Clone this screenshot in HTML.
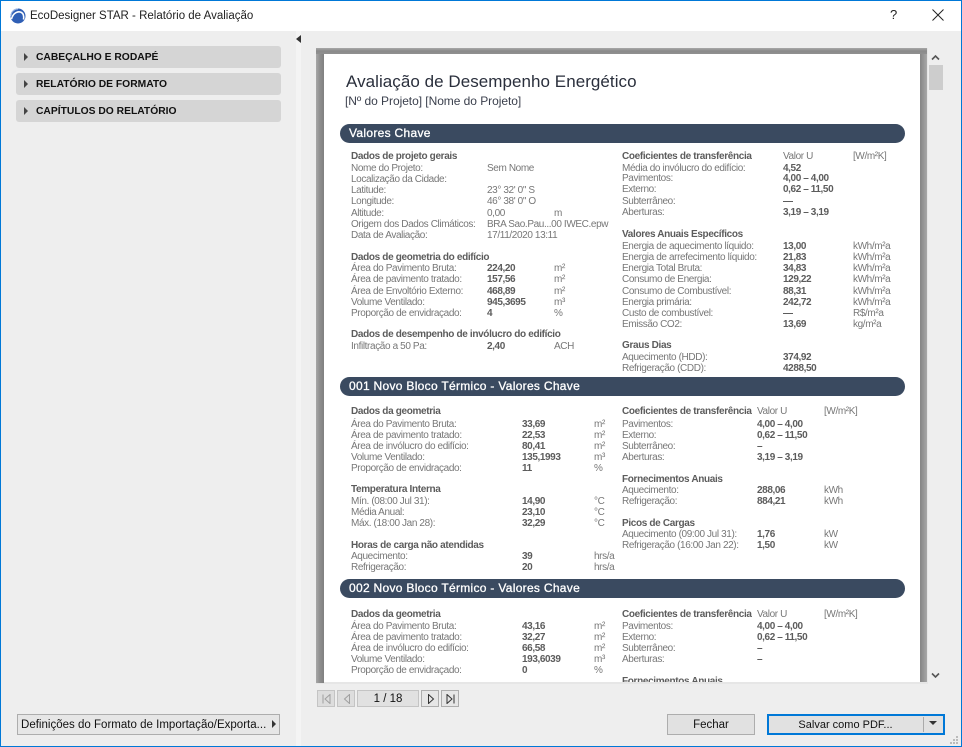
<!DOCTYPE html>
<html><head><meta charset="utf-8"><style>
html,body{margin:0;padding:0;width:962px;height:747px;overflow:hidden;background:#eee}
body{position:relative;font-family:"Liberation Sans",sans-serif}
div,span{position:absolute;white-space:nowrap}
.t{font-size:10px;line-height:12px;color:#777;height:12px;letter-spacing:-.38px}
.h{font-size:10px;line-height:12px;color:#5c5c5c;font-weight:bold;letter-spacing:-.34px;height:12px}
.b{font-size:10px;line-height:12px;color:#5c5c5c;font-weight:bold;letter-spacing:-.4px;height:12px}
.bar{left:340px;width:565px;height:19px;background:#3a4a60;border-radius:10px;color:#fff;font-size:12px;line-height:19px}
.bar span{left:9px;top:0;letter-spacing:.3px;-webkit-text-stroke:.3px #fff}
.acc{left:16px;width:265px;height:22px;background:#d5d5d5;border-radius:3px;font-size:10.3px;font-weight:bold;line-height:23px;color:#111}
.acc span{left:20px;top:0}
.acc i{position:absolute;left:8px;top:7px;width:0;height:0;border-left:4px solid #444;border-top:4px solid transparent;border-bottom:4px solid transparent}
.btn{background:#e1e1e1;border:1px solid #adadad;box-sizing:border-box;font-size:11.5px;color:#111;text-align:center}
</style></head><body>
<div style="left:0;top:0;width:962px;height:31px;background:#fff"></div>
<div style="left:0;top:0;width:962px;height:1px;background:#0078d7"></div>
<div style="left:0;top:0;width:1px;height:747px;background:#0078d7"></div>
<div style="left:961px;top:0;width:1px;height:747px;background:#0078d7"></div>
<div style="left:0;top:746px;width:962px;height:1px;background:#0078d7"></div>
<svg style="position:absolute;left:10px;top:8px" width="16" height="16" viewBox="0 0 16 16"><circle cx="8" cy="8" r="7.5" fill="#2f5fb5"/><path d="M1.5 11C3 5 8 2.5 11.5 4.5c2 1.2 2.5 4 2 7" fill="none" stroke="#fff" stroke-width="1.6"/><path d="M1 8A7 7 0 0 1 8 1" fill="none" stroke="#9db8e6" stroke-width="1"/></svg>
<div style="left:30px;top:8px;font-size:11.5px;line-height:16px;color:#222">EcoDesigner STAR - Relatório de Avaliação</div>
<div style="left:890px;top:7px;font-size:13px;line-height:16px;color:#222">?</div>
<svg style="position:absolute;left:932px;top:9px" width="12" height="12" viewBox="0 0 12 12"><path d="M.5.5l11 11M11.5.5l-11 11" stroke="#222" stroke-width="1" fill="none"/></svg>

<div style="left:296px;top:31px;width:5px;height:715px;background:#f4f4f4"></div>
<div style="left:296px;top:35px;width:0;height:0;border-right:5px solid #333;border-top:4px solid transparent;border-bottom:4px solid transparent"></div>

<div class="acc" style="top:46px"><i></i><span>CABEÇALHO E RODAPÉ</span></div>
<div class="acc" style="top:73px"><i></i><span>RELATÓRIO DE FORMATO</span></div>
<div class="acc" style="top:100px"><i></i><span>CAPÍTULOS DO RELATÓRIO</span></div>

<div class="btn" style="left:17px;top:714px;width:263px;height:21px;text-align:left;line-height:21px;padding-left:3px;background:#e6e6e6;letter-spacing:.01px">Definições do Formato de Importação/Exporta...<i style="position:absolute;left:254px;top:5px;width:0;height:0;border-left:4px solid #333;border-top:4px solid transparent;border-bottom:4px solid transparent"></i></div>

<!-- page frame -->
<div style="left:316px;top:48px;width:612px;height:636px;background:#e6e6e6"></div>
<div style="left:316px;top:48px;width:611px;height:635px;background:linear-gradient(90deg,#a8a8a8,#8e8e8e 4px,#808080 8px,#808080 603px,#a8a8a8)"></div>
<div style="left:316px;top:48px;width:611px;height:6px;background:linear-gradient(180deg,#a8a8a8,#8a8a8a 3px,#909090)"></div>
<div style="left:324px;top:54px;width:596px;height:628px;background:#fff"></div>
<div style="left:324px;top:682px;width:603px;height:2px;background:#e6e6e6"></div>

<div style="left:346px;top:72px;font-size:17px;line-height:20px;color:#2a2f3c;letter-spacing:.05px">Avaliação de Desempenho Energético</div>
<div style="left:345px;top:94px;font-size:12px;line-height:14px;color:#3a3f4c;letter-spacing:-.05px">[Nº do Projeto] [Nome do Projeto]</div>

<div class="bar" style="top:124px"><span>Valores Chave</span></div>
<div class="bar" style="top:377px"><span>001 Novo Bloco Térmico - Valores Chave</span></div>
<div class="bar" style="top:579px"><span>002 Novo Bloco Térmico - Valores Chave</span></div>

<div style="left:0;top:2px;width:962px;height:680px;overflow:hidden">
<!-- Section 1 left -->
<span class="h" style="left:351px;top:149px">Dados de projeto gerais</span>
<span class="t" style="left:351px;top:161px">Nome do Projeto:</span><span class="t" style="left:487px;top:161px">Sem Nome</span>
<span class="t" style="left:351px;top:172px">Localização da Cidade:</span>
<span class="t" style="left:351px;top:183px">Latitude:</span><span class="t" style="left:487px;top:183px">23° 32' 0" S</span>
<span class="t" style="left:351px;top:194px">Longitude:</span><span class="t" style="left:487px;top:194px">46° 38' 0" O</span>
<span class="t" style="left:351px;top:206px">Altitude:</span><span class="t" style="left:487px;top:206px">0,00</span><span class="t" style="left:554px;top:206px">m</span>
<span class="t" style="left:351px;top:217px">Origem dos Dados Climáticos:</span><span class="t" style="left:487px;top:217px">BRA Sao.Pau...00 IWEC.epw</span>
<span class="t" style="left:351px;top:228px">Data de Avaliação:</span><span class="t" style="left:487px;top:228px">17/11/2020 13:11</span>

<span class="h" style="left:351px;top:250px">Dados de geometria do edifício</span>
<span class="t" style="left:351px;top:261px">Área do Pavimento Bruta:</span><span class="b" style="left:487px;top:261px">224,20</span><span class="t" style="left:554px;top:261px">m²</span>
<span class="t" style="left:351px;top:272px">Área de pavimento tratado:</span><span class="b" style="left:487px;top:272px">157,56</span><span class="t" style="left:554px;top:272px">m²</span>
<span class="t" style="left:351px;top:284px">Área de Envoltório Externo:</span><span class="b" style="left:487px;top:284px">468,89</span><span class="t" style="left:554px;top:284px">m²</span>
<span class="t" style="left:351px;top:295px">Volume Ventilado:</span><span class="b" style="left:487px;top:295px">945,3695</span><span class="t" style="left:554px;top:295px">m³</span>
<span class="t" style="left:351px;top:306px">Proporção de envidraçado:</span><span class="b" style="left:487px;top:306px">4</span><span class="t" style="left:554px;top:306px">%</span>

<span class="h" style="left:351px;top:327px">Dados de desempenho de invólucro do edifício</span>
<span class="t" style="left:351px;top:339px">Infiltração a 50 Pa:</span><span class="b" style="left:487px;top:339px">2,40</span><span class="t" style="left:554px;top:339px">ACH</span>

<!-- Section 1 right -->
<span class="h" style="left:622px;top:149px">Coeficientes de transferência</span><span class="t" style="left:783px;top:149px">Valor U</span><span class="t" style="left:853px;top:149px">[W/m²K]</span>
<span class="t" style="left:622px;top:161px">Média do invólucro do edifício:</span><span class="b" style="left:783px;top:161px">4,52</span>
<span class="t" style="left:622px;top:171px">Pavimentos:</span><span class="b" style="left:783px;top:171px">4,00 – 4,00</span>
<span class="t" style="left:622px;top:182px">Externo:</span><span class="b" style="left:783px;top:182px">0,62 – 11,50</span>
<span class="t" style="left:622px;top:194px">Subterrâneo:</span><span class="b" style="left:783px;top:194px">—</span>
<span class="t" style="left:622px;top:205px">Aberturas:</span><span class="b" style="left:783px;top:205px">3,19 – 3,19</span>

<span class="h" style="left:622px;top:227px">Valores Anuais Específicos</span>
<span class="t" style="left:622px;top:239px">Energia de aquecimento líquido:</span><span class="b" style="left:783px;top:239px">13,00</span><span class="t" style="left:853px;top:239px">kWh/m²a</span>
<span class="t" style="left:622px;top:250px">Energia de arrefecimento líquido:</span><span class="b" style="left:783px;top:250px">21,83</span><span class="t" style="left:853px;top:250px">kWh/m²a</span>
<span class="t" style="left:622px;top:261px">Energia Total Bruta:</span><span class="b" style="left:783px;top:261px">34,83</span><span class="t" style="left:853px;top:261px">kWh/m²a</span>
<span class="t" style="left:622px;top:272px">Consumo de Energia:</span><span class="b" style="left:783px;top:272px">129,22</span><span class="t" style="left:853px;top:272px">kWh/m²a</span>
<span class="t" style="left:622px;top:284px">Consumo de Combustível:</span><span class="b" style="left:783px;top:284px">88,31</span><span class="t" style="left:853px;top:284px">kWh/m²a</span>
<span class="t" style="left:622px;top:295px">Energia primária:</span><span class="b" style="left:783px;top:295px">242,72</span><span class="t" style="left:853px;top:295px">kWh/m²a</span>
<span class="t" style="left:622px;top:306px">Custo de combustível:</span><span class="b" style="left:783px;top:306px">—</span><span class="t" style="left:853px;top:306px">R$/m²a</span>
<span class="t" style="left:622px;top:317px">Emissão CO2:</span><span class="b" style="left:783px;top:317px">13,69</span><span class="t" style="left:853px;top:317px">kg/m²a</span>

<span class="h" style="left:622px;top:338px">Graus Dias</span>
<span class="t" style="left:622px;top:350px">Aquecimento (HDD):</span><span class="b" style="left:783px;top:350px">374,92</span>
<span class="t" style="left:622px;top:361px">Refrigeração (CDD):</span><span class="b" style="left:783px;top:361px">4288,50</span>

<!-- Section 2 left -->
<span class="h" style="left:351px;top:404px">Dados da geometria</span>
<span class="t" style="left:351px;top:417px">Área do Pavimento Bruta:</span><span class="b" style="left:522px;top:417px">33,69</span><span class="t" style="left:594px;top:417px">m²</span>
<span class="t" style="left:351px;top:428px">Área de pavimento tratado:</span><span class="b" style="left:522px;top:428px">22,53</span><span class="t" style="left:594px;top:428px">m²</span>
<span class="t" style="left:351px;top:439px">Área de invólucro do edifício:</span><span class="b" style="left:522px;top:439px">80,41</span><span class="t" style="left:594px;top:439px">m²</span>
<span class="t" style="left:351px;top:450px">Volume Ventilado:</span><span class="b" style="left:522px;top:450px">135,1993</span><span class="t" style="left:594px;top:450px">m³</span>
<span class="t" style="left:351px;top:461px">Proporção de envidraçado:</span><span class="b" style="left:522px;top:461px">11</span><span class="t" style="left:594px;top:461px">%</span>

<span class="h" style="left:351px;top:482px">Temperatura Interna</span>
<span class="t" style="left:351px;top:494px">Mín. (08:00 Jul 31):</span><span class="b" style="left:522px;top:494px">14,90</span><span class="t" style="left:594px;top:494px">°C</span>
<span class="t" style="left:351px;top:505px">Média Anual:</span><span class="b" style="left:522px;top:505px">23,10</span><span class="t" style="left:594px;top:505px">°C</span>
<span class="t" style="left:351px;top:516px">Máx. (18:00 Jan 28):</span><span class="b" style="left:522px;top:516px">32,29</span><span class="t" style="left:594px;top:516px">°C</span>

<span class="h" style="left:351px;top:538px">Horas de carga não atendidas</span>
<span class="t" style="left:351px;top:549px">Aquecimento:</span><span class="b" style="left:522px;top:549px">39</span><span class="t" style="left:594px;top:549px">hrs/a</span>
<span class="t" style="left:351px;top:560px">Refrigeração:</span><span class="b" style="left:522px;top:560px">20</span><span class="t" style="left:594px;top:560px">hrs/a</span>

<!-- Section 2 right -->
<span class="h" style="left:622px;top:404px">Coeficientes de transferência</span><span class="t" style="left:757px;top:404px">Valor U</span><span class="t" style="left:824px;top:404px">[W/m²K]</span>
<span class="t" style="left:622px;top:417px">Pavimentos:</span><span class="b" style="left:757px;top:417px">4,00 – 4,00</span>
<span class="t" style="left:622px;top:428px">Externo:</span><span class="b" style="left:757px;top:428px">0,62 – 11,50</span>
<span class="t" style="left:622px;top:439px">Subterrâneo:</span><span class="b" style="left:757px;top:439px">–</span>
<span class="t" style="left:622px;top:450px">Aberturas:</span><span class="b" style="left:757px;top:450px">3,19 – 3,19</span>

<span class="h" style="left:622px;top:472px">Fornecimentos Anuais</span>
<span class="t" style="left:622px;top:483px">Aquecimento:</span><span class="b" style="left:757px;top:483px">288,06</span><span class="t" style="left:824px;top:483px">kWh</span>
<span class="t" style="left:622px;top:494px">Refrigeração:</span><span class="b" style="left:757px;top:494px">884,21</span><span class="t" style="left:824px;top:494px">kWh</span>

<span class="h" style="left:622px;top:516px">Picos de Cargas</span>
<span class="t" style="left:622px;top:527px">Aquecimento (09:00 Jul 31):</span><span class="b" style="left:757px;top:527px">1,76</span><span class="t" style="left:824px;top:527px">kW</span>
<span class="t" style="left:622px;top:538px">Refrigeração (16:00 Jan 22):</span><span class="b" style="left:757px;top:538px">1,50</span><span class="t" style="left:824px;top:538px">kW</span>

<!-- Section 3 left -->
<span class="h" style="left:351px;top:607px">Dados da geometria</span>
<span class="t" style="left:351px;top:619px">Área do Pavimento Bruta:</span><span class="b" style="left:522px;top:619px">43,16</span><span class="t" style="left:594px;top:619px">m²</span>
<span class="t" style="left:351px;top:630px">Área de pavimento tratado:</span><span class="b" style="left:522px;top:630px">32,27</span><span class="t" style="left:594px;top:630px">m²</span>
<span class="t" style="left:351px;top:641px">Área de invólucro do edifício:</span><span class="b" style="left:522px;top:641px">66,58</span><span class="t" style="left:594px;top:641px">m²</span>
<span class="t" style="left:351px;top:652px">Volume Ventilado:</span><span class="b" style="left:522px;top:652px">193,6039</span><span class="t" style="left:594px;top:652px">m³</span>
<span class="t" style="left:351px;top:663px">Proporção de envidraçado:</span><span class="b" style="left:522px;top:663px">0</span><span class="t" style="left:594px;top:663px">%</span>

<!-- Section 3 right -->
<span class="h" style="left:622px;top:607px">Coeficientes de transferência</span><span class="t" style="left:757px;top:607px">Valor U</span><span class="t" style="left:824px;top:607px">[W/m²K]</span>
<span class="t" style="left:622px;top:619px">Pavimentos:</span><span class="b" style="left:757px;top:619px">4,00 – 4,00</span>
<span class="t" style="left:622px;top:630px">Externo:</span><span class="b" style="left:757px;top:630px">0,62 – 11,50</span>
<span class="t" style="left:622px;top:641px">Subterrâneo:</span><span class="b" style="left:757px;top:641px">–</span>
<span class="t" style="left:622px;top:652px">Aberturas:</span><span class="b" style="left:757px;top:652px">–</span>
<span class="h" style="left:622px;top:674px">Fornecimentos Anuais</span>
</div>

<!-- scrollbar -->
<svg style="position:absolute;left:931px;top:54px" width="9" height="7" viewBox="0 0 9 7"><path d="M1 5.5L4.5 2 8 5.5" fill="none" stroke="#555" stroke-width="1.6"/></svg>
<div style="left:929px;top:65px;width:14px;height:25px;background:#cdcdcd"></div>
<svg style="position:absolute;left:931px;top:672px" width="9" height="7" viewBox="0 0 9 7"><path d="M1 1.5L4.5 5 8 1.5" fill="none" stroke="#555" stroke-width="1.6"/></svg>

<!-- pager -->
<div class="btn" style="left:317px;top:690px;width:18px;height:17px;background:#ddd;border-color:#c4c4c4"><svg style="position:absolute;left:4px;top:3px" width="9" height="10" viewBox="0 0 9 10"><path d="M1 .5v9M8 .5L3 5l5 4.5z" fill="none" stroke="#a0a0a0"/></svg></div>
<div class="btn" style="left:337px;top:690px;width:18px;height:17px;background:#ddd;border-color:#c4c4c4"><svg style="position:absolute;left:5px;top:3px" width="8" height="10" viewBox="0 0 8 10"><path d="M6.5 .5L1.5 5l5 4.5z" fill="none" stroke="#a0a0a0"/></svg></div>
<div class="btn" style="left:357px;top:690px;width:62px;height:17px;background:#e1e1e1;border-color:#c4c4c4;line-height:17px">1 / 18</div>
<div class="btn" style="left:421px;top:690px;width:18px;height:17px;background:#e6e6e6"><svg style="position:absolute;left:5px;top:3px" width="8" height="10" viewBox="0 0 8 10"><path d="M1.5 .5L6.5 5l-5 4.5z" fill="none" stroke="#333"/></svg></div>
<div class="btn" style="left:441px;top:690px;width:18px;height:17px;background:#e6e6e6"><svg style="position:absolute;left:4px;top:3px" width="9" height="10" viewBox="0 0 9 10"><path d="M8 .5v9M1 .5L6 5l-5 4.5z" fill="none" stroke="#333"/></svg></div>

<!-- buttons -->
<div class="btn" style="left:667px;top:714px;width:88px;height:21px;line-height:21px">Fechar</div>
<div class="btn" style="left:767px;top:714px;width:178px;height:21px;border:2px solid #0078d7;line-height:19px;padding-right:21px;font-size:11px">Salvar como PDF...<div style="left:154px;top:1px;width:1px;height:15px;background:#aaa"></div><div style="left:160px;top:5px;width:0;height:0;border-top:4px solid #333;border-left:4px solid transparent;border-right:4px solid transparent"></div></div>
<svg style="position:absolute;left:949px;top:735px" width="10" height="10" viewBox="0 0 10 10" fill="#bbb"><rect x="7" y="1" width="2" height="2"/><rect x="4" y="4" width="2" height="2"/><rect x="7" y="4" width="2" height="2"/><rect x="1" y="7" width="2" height="2"/><rect x="4" y="7" width="2" height="2"/><rect x="7" y="7" width="2" height="2"/></svg>
</body></html>
